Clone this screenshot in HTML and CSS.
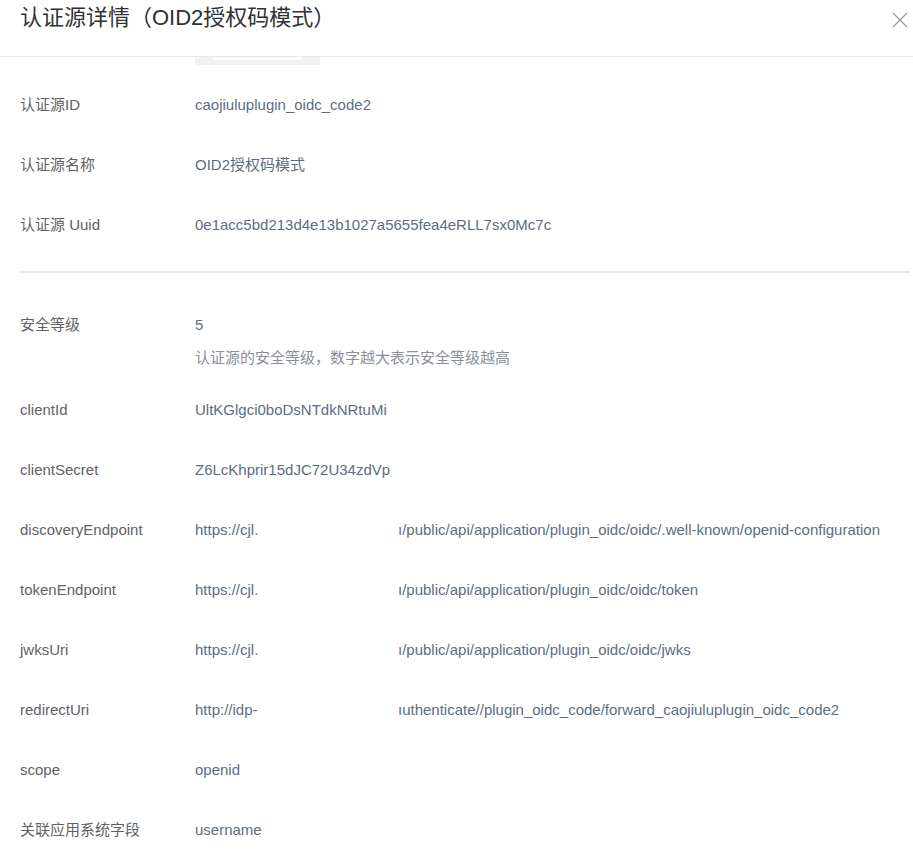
FILE: index.html
```html
<!DOCTYPE html>
<html lang="zh-CN">
<head>
    <meta charset="UTF-8">
    <meta name="viewport" content="width=device-width, initial-scale=1.0">
    <title>认证源详情</title>
    <link rel="stylesheet" href="styles.css">
</head>
<body>
    <div class="drawer">
        <div class="drawer-header">
            <h2 class="drawer-title">认证源详情（OID2授权码模式）</h2>
            <button class="btn-close" aria-label="关闭">
                <svg width="16" height="16" viewBox="0 0 16 16">
                    <path d="M1 1 L15 15 M15 1 L1 15" stroke="#999" stroke-width="1.3" fill="none"/>
                </svg>
            </button>
        </div>

        <div class="drawer-body">
            <div class="logo-box"><span class="logo-inner"></span></div>

            <div class="detail-row">
                <div class="detail-label">认证源ID</div>
                <div class="detail-value">caojiuluplugin_oidc_code2</div>
            </div>
            <div class="detail-row">
                <div class="detail-label">认证源名称</div>
                <div class="detail-value">OID2授权码模式</div>
            </div>
            <div class="detail-row">
                <div class="detail-label">认证源 Uuid</div>
                <div class="detail-value">0e1acc5bd213d4e13b1027a5655fea4eRLL7sx0Mc7c</div>
            </div>

            <div class="divider"></div>

            <div class="detail-row detail-row--hint">
                <div class="detail-label">安全等级</div>
                <div class="detail-value">
                    5
                    <div class="detail-hint">认证源的安全等级，数字越大表示安全等级越高</div>
                </div>
            </div>
            <div class="detail-row">
                <div class="detail-label">clientId</div>
                <div class="detail-value">UltKGlgci0boDsNTdkNRtuMi</div>
            </div>
            <div class="detail-row">
                <div class="detail-label">clientSecret</div>
                <div class="detail-value">Z6LcKhprir15dJC72U34zdVp</div>
            </div>
            <div class="detail-row">
                <div class="detail-label">discoveryEndpoint</div>
                <div class="detail-value"><span class="masked">https://cjl.</span>ı/public/api/application/plugin_oidc/oidc/.well-known/openid-configuration</div>
            </div>
            <div class="detail-row">
                <div class="detail-label">tokenEndpoint</div>
                <div class="detail-value"><span class="masked">https://cjl.</span>ı/public/api/application/plugin_oidc/oidc/token</div>
            </div>
            <div class="detail-row">
                <div class="detail-label">jwksUri</div>
                <div class="detail-value"><span class="masked">https://cjl.</span>ı/public/api/application/plugin_oidc/oidc/jwks</div>
            </div>
            <div class="detail-row">
                <div class="detail-label">redirectUri</div>
                <div class="detail-value"><span class="masked">http://idp-</span>ıuthenticate//plugin_oidc_code/forward_caojiuluplugin_oidc_code2</div>
            </div>
            <div class="detail-row">
                <div class="detail-label">scope</div>
                <div class="detail-value">openid</div>
            </div>
            <div class="detail-row">
                <div class="detail-label">关联应用系统字段</div>
                <div class="detail-value">username</div>
            </div>
        </div>
    </div>
</body>
</html>
```

FILE: styles.css
```css
* {
    margin: 0;
    padding: 0;
    box-sizing: border-box;
}

body {
    background: #fff;
    font-family: 'Liberation Sans', Arial, 'Noto Sans CJK SC', sans-serif;
    font-size: 15px;
    overflow: hidden;
    height: 859px;
}

.drawer-header {
    height: 57px;
    padding: 0 4px 0 20px;
    border-bottom: 1px solid #e4e7ed;
    display: flex;
    justify-content: space-between;
    align-items: flex-start;
}

.drawer-title {
    font-size: 22px;
    font-weight: 400;
    line-height: 36px;
    color: #303133;
}

.btn-close {
    border: none;
    background: none;
    margin-top: 12px;
    width: 18px;
    height: 18px;
    cursor: pointer;
}

.drawer-body {
    padding: 0 3px 0 20px;
}

.logo-box {
    margin-left: 175px;
    width: 125px;
    height: 8px;
    background: #f2f2f2;
    margin-bottom: 9px;
}

.logo-inner {
    display: block;
    margin-left: 18px;
    width: 89px;
    height: 3px;
    background: #fff;
}

.detail-row {
    display: flex;
    padding: 21px 0 19px;
    line-height: 20px;
}

.detail-row--hint {
    padding-bottom: 11px;
}

.detail-label {
    width: 175px;
    flex-shrink: 0;
    color: #606266;
}

.detail-value {
    color: #5e6d82;
    white-space: nowrap;
}

.detail-hint {
    margin-top: 13px;
    color: #8a8f99;
}

.masked {
    display: inline-block;
    width: 203px;
}

.divider {
    height: 2px;
    background: #e4e7ed;
    margin: 17px 0 21px;
}
```
